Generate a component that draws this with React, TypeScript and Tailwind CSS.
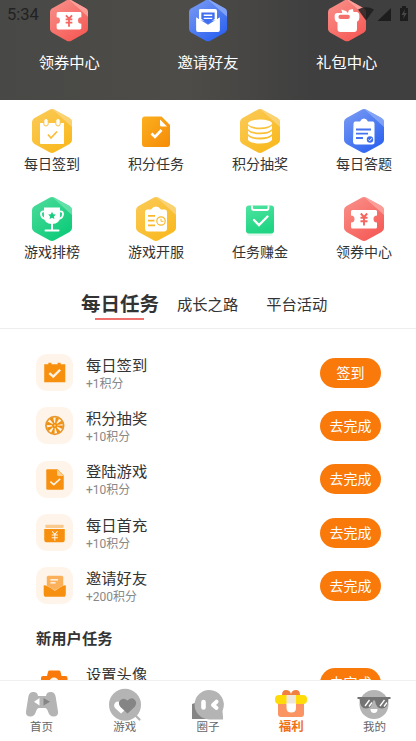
import type { ReactNode } from 'react'
import clsx from 'clsx'

type Tone = 'red' | 'blue' | 'yellow' | 'green'

const tones: Record<Tone, [string, string, string]> = {
  red: ['#f9928b', '#f65b57', '#fba8a2'],
  blue: ['#7c9df3', '#2d63f0', '#8fabf7'],
  yellow: ['#fbcb59', '#f9b91f', '#fbd67f'],
  green: ['#4fdc9c', '#0ccb79', '#6fe5af'],
}

function Hexagon({ id, tone, className, children }: { id: string; tone: Tone; className: string; children: ReactNode }) {
  const [from, to, facet] = tones[tone]
  return (
    <svg viewBox="0 0 40 44" className={clsx('shrink-0', className)}>
      <defs>
        <linearGradient id={id} x1="0" y1="0" x2="0.7" y2="1">
          <stop offset="0" stopColor={from} />
          <stop offset="1" stopColor={to} />
        </linearGradient>
      </defs>
      <path d="M17.5.7Q20-.6 22.5.7L37.5 9Q40 10.4 40 13V31Q40 33.6 37.5 35L22.5 43.3Q20 44.6 17.5 43.3L2.5 35Q0 33.6 0 31V13Q0 10.4 2.5 9Z" fill={`url(#${id})`} />
      <path d="M20 0Q21.4 0 22.5.7L37.5 9Q40 10.4 40 13V18Z" fill={facet} opacity="0.8" />
      {children}
    </svg>
  )
}

const Coupon = ({ color }: { color: string }) => (
  <g>
    <path d="M8.5 13H31.5Q33 13 33 14.5V18.5A3.5 3.5 0 0 0 33 25.5V30Q33 31.5 31.5 31.5H8.5Q7 31.5 7 30V25.5A3.5 3.5 0 0 0 7 18.5V14.5Q7 13 8.5 13Z" fill="#fff" />
    <path d="M16.8 16.5L20 20L23.2 16.5M16.5 20.8H23.5M16.5 24.3H23.5M20 20V28.5" stroke={color} strokeWidth="1.9" fill="none" />
  </g>
)

const Calendar = () => (
  <g>
    <path d="M8 14H32V34Q32 35 31 35H9Q8 35 8 34Z" fill="#fff" />
    <rect x="11.8" y="9.5" width="4.4" height="7.5" rx="2.2" fill="#fff" stroke="#f9c142" strokeWidth="1" />
    <rect x="23.8" y="9.5" width="4.4" height="7.5" rx="2.2" fill="#fff" stroke="#f9c142" strokeWidth="1" />
    <path d="M16 25.5L19 29L25 22.5" stroke="#f9bd3b" strokeWidth="1.8" fill="none" />
  </g>
)

const Coins = () => (
  <g fill="#fff">
    <ellipse cx="20" cy="14.5" rx="12" ry="4" />
    <path d="M8 16.5Q11 20.2 20 20.2T32 16.5V20Q29 23.5 20 23.5T8 20Z" />
    <path d="M8 21.7Q11 25.2 20 25.2T32 21.7V25Q29 28.6 20 28.6T8 25Z" />
    <path d="M8 27Q11 30.4 20 30.4T32 27V31Q29 34.5 20 34.5T8 31Z" />
  </g>
)

const Quiz = () => (
  <g>
    <path d="M11 12.5H16Q17.5 9.5 20 9.5T24 12.5H29Q30.5 12.5 30.5 15V32Q31 35.5 28 35.5H12Q9 35.5 9 32L9.5 15Q9.5 12.5 11 12.5Z" fill="#fff" />
    <path d="M12 20.5H27M12 24.7H24M12 29H19" stroke="#4773ee" strokeWidth="1.8" />
    <circle cx="26" cy="30.5" r="3.2" fill="#3d6df0" />
    <path d="M24.4 30.5L25.7 31.8L27.9 29.2" stroke="#fff" strokeWidth="1" fill="none" />
  </g>
)

const Trophy = () => (
  <g>
    <path d="M12 10.5H28V20Q28 26.5 20 27Q12 26.5 12 20Z" fill="#fff" />
    <path d="M12.5 14.5Q9 13.8 9 17Q9.2 21.5 14 22M27.5 14.5Q31 13.8 31 17Q30.8 21.5 26 22" stroke="#fff" strokeWidth="1.9" fill="none" />
    <path d="M20 26V32.5M13.5 33.5H26.5" stroke="#fff" strokeWidth="2" strokeLinecap="round" />
    <path d="M20 14.8L21.2 17.3L23.8 17.6L21.9 19.4L22.4 22L20 20.7L17.6 22L18.1 19.4L16.2 17.6L18.8 17.3Z" fill="#19cc80" />
  </g>
)

const Schedule = () => (
  <g>
    <path d="M11 12.5H15Q17 9.5 20 9.5T25 12.5H29Q31 12.5 31 15V31.5Q31 34.5 28 34.5H12Q9 34.5 9 31.5V15Q9 12.5 11 12.5Z" fill="#fff" />
    <path d="M12 18.8H19M12 23.6H18.5M12 28.4H19" stroke="#f9b92e" strokeWidth="1.7" />
    <circle cx="25" cy="24" r="4.2" fill="#fff" stroke="#f9b92e" strokeWidth="1.2" />
    <path d="M25 21.8V24.3H27.3" stroke="#f9b92e" strokeWidth="1" fill="none" />
  </g>
)

const Mail = () => (
  <g>
    <path d="M12 10H27.5Q29.5 10 29.5 12V22H10.5V11.5Q10.5 10 12 10Z" fill="#fff" />
    <path d="M7.5 18.5L12 21.5L20 26.5L28 21.5L32.5 18.5V32Q32.5 34 30.5 34H9.5Q7.5 34 7.5 32Z" fill="#fff" />
    <path d="M13 13.5H27V20.5L20 25L13 20.5Z" fill="#3f6ff0" />
    <path d="M15.5 16.5H24.5M15.5 19.8H24.5" stroke="#fff" strokeWidth="1.5" />
  </g>
)

const GiftBag = () => (
  <g>
    <path d="M10 14H15L14 10.5L19 12L21 14L22 11L26 10L27 13H30.5Q33 13.5 33 17V19Q32.5 23 30.5 23V31Q30.5 34 27.5 34H13Q10 34 10 31V24Q7 23 7 19V17Q7 14 10 14Z" fill="#fff" />
    <rect x="11" y="16" width="12" height="4.3" rx="2.1" fill="#f5716d" />
  </g>
)

function PointsTask() {
  return (
    <svg viewBox="0 0 40 44" className="h-11 w-10 shrink-0">
      <defs>
        <linearGradient id="points" x1="0" y1="0" x2="1" y2="1">
          <stop offset="0" stopColor="#fbb01f" />
          <stop offset="1" stopColor="#f68b08" />
        </linearGradient>
      </defs>
      <path d="M9 7.5H25.5L34 16V35Q34 38 31 38H9Q6 38 6 35V10.5Q6 7.5 9 7.5Z" fill="url(#points)" />
      <path d="M24 10.5L31 17.5H25.5Q24 17.5 24 16Z" fill="#fff" />
      <path d="M15.5 24.5L19 28L25.5 21" stroke="#fff" strokeWidth="2.6" fill="none" />
    </svg>
  )
}

function EarnTask() {
  return (
    <svg viewBox="0 0 40 44" className="h-11 w-10 shrink-0">
      <rect x="7" y="33" width="26" height="6" rx="3" fill="#e3f8ee" />
      <defs>
        <linearGradient id="earn" x1="0" y1="0" x2="0.3" y2="1">
          <stop offset="0" stopColor="#4de4a0" />
          <stop offset="1" stopColor="#20d583" />
        </linearGradient>
      </defs>
      <rect x="6" y="8.5" width="28" height="28" rx="3" fill="url(#earn)" />
      <path d="M12 8.5V11Q12 13 14 13H26.5Q28.5 13 28.5 11V8.5" stroke="#fff" strokeWidth="1.8" fill="none" />
      <path d="M14 23L19 28L27.5 19.5" stroke="#fff" strokeWidth="2.3" strokeLinecap="round" fill="none" />
    </svg>
  )
}

const banner = [
  { label: '领券中心', icon: <Hexagon id="b1" tone="red" className="h-[43px] w-[38px]"><Coupon color="#f56661" /></Hexagon> },
  { label: '邀请好友', icon: <Hexagon id="b2" tone="blue" className="h-[43px] w-[38px]"><Mail /></Hexagon> },
  { label: '礼包中心', icon: <Hexagon id="b3" tone="red" className="h-[43px] w-[38px]"><GiftBag /></Hexagon> },
]

const shortcuts = [
  { label: '每日签到', icon: <Hexagon id="s1" tone="yellow" className="h-11 w-10"><Calendar /></Hexagon> },
  { label: '积分任务', icon: <PointsTask /> },
  { label: '积分抽奖', icon: <Hexagon id="s3" tone="yellow" className="h-11 w-10"><Coins /></Hexagon> },
  { label: '每日答题', icon: <Hexagon id="s4" tone="blue" className="h-11 w-10"><Quiz /></Hexagon> },
  { label: '游戏排榜', icon: <Hexagon id="s5" tone="green" className="h-11 w-10"><Trophy /></Hexagon> },
  { label: '游戏开服', icon: <Hexagon id="s6" tone="yellow" className="h-11 w-10"><Schedule /></Hexagon> },
  { label: '任务赚金', icon: <EarnTask /> },
  { label: '领券中心', icon: <Hexagon id="s8" tone="red" className="h-11 w-10"><Coupon color="#f56661" /></Hexagon> },
]

// Task glyphs share a 36x36 box
const tasks = [
  {
    title: '每日签到',
    points: '+1积分',
    action: '签到',
    icon: (
      <>
        <path d="M8 10H12V8.5H15V10H21V8.5H24V10H28.5V27.5H8Z" fill="#f7900f" />
        <path d="M13 18.5L16.8 22L23.5 15.3" stroke="#fff3e4" strokeWidth="2.3" fill="none" />
      </>
    ),
  },
  {
    title: '积分抽奖',
    points: '+10积分',
    action: '去完成',
    icon: (
      <>
        <circle cx="18.3" cy="18" r="8.6" fill="#fff3e4" stroke="#e8962a" strokeWidth="1.7" />
        <circle cx="18.3" cy="18" r="5.2" stroke="#f0900f" strokeWidth="5.5" strokeDasharray="2.3 1.784" fill="none" />
        <circle cx="18.3" cy="18" r="2.7" fill="#f0900f" />
        <circle cx="18.3" cy="18" r="1" fill="#fbc77c" />
      </>
    ),
  },
  {
    title: '登陆游戏',
    points: '+10积分',
    action: '去完成',
    icon: (
      <>
        <path d="M11 8H21L27 14V26.5Q27 28 25.5 28H11.5Q10 28 10 26.5V9Q10 8 11 8Z" fill="#f7900f" />
        <path d="M20.5 8L27 14.5H22Q20.5 14.5 20.5 13Z" fill="#fccf91" />
        <path d="M14 20L17.3 23L23.5 17.5" stroke="#fff3e4" strokeWidth="1.6" fill="none" />
      </>
    ),
  },
  {
    title: '每日首充',
    points: '+10积分',
    action: '去完成',
    icon: (
      <>
        <rect x="9" y="10.5" width="18" height="3" rx="1" fill="#fac98d" />
        <path d="M8 14.5H28V25Q28 27.5 26 27.5H10Q8 27.5 8 25Z" fill="#f7900f" />
        <path d="M15.7 16.8L18.3 19.8L21 16.8M15.3 20.5H21.3M15.3 23H21.3M18.3 20V26" stroke="#fff3e4" strokeWidth="1" fill="none" />
      </>
    ),
  },
  {
    title: '邀请好友',
    points: '+200积分',
    action: '去完成',
    icon: (
      <>
        <path d="M12 8.5H25Q26.5 8.5 26.5 10V18L18.3 22.5L10.5 18V10Q10.5 8.5 12 8.5Z" fill="#fbb15b" />
        <path d="M14 12.5H21.5M14 15.5H19" stroke="#fff" strokeWidth="1.3" />
        <path d="M7.5 18Q9 17 18.3 23Q28 17 29 18V26Q29 29 27 29H9.5Q7.5 29 7.5 26Z" fill="#f7900f" />
      </>
    ),
  },
]

const nav = [
  {
    label: '首页',
    icon: (
      <>
        <path d="M7.5 2Q12.5 1.5 13 6H21Q21.5 1.5 26.5 2Q30 2.3 30.7 7L33 21.5Q33.5 26.5 28.5 26.5Q24.5 26.5 23 21.5Q22 18 20 18H14Q12 18 11 21.5Q9.5 26.5 5.5 26.5Q.5 26.5 1 21.5L3.3 7Q4 2.3 7.5 2Z" fill="#b4b4b4" />
        <path d="M14.5 8V15.5L9 11.7Z" fill="#fff" />
        <path d="M18.5 8V15.5L25 11.7Z" fill="#858585" />
      </>
    ),
  },
  {
    label: '游戏',
    icon: (
      <>
        <path d="M27 25Q29 27 31.5 29.5" stroke="#b4b4b4" strokeWidth="2.3" strokeLinecap="round" />
        <circle cx="17" cy="14.7" r="16" fill="#b4b4b4" />
        <path d="M7.5 12.5Q10 10.5 12.5 13L17 20L13 23.5L7 18Q5 15 7.5 12.5Z" fill="#fff" />
        <path d="M19.5 10.5Q24 6.5 27 10Q29.5 13.5 26.5 17L19.5 23.5L12.5 17Q9.5 13.5 12 10.5Q15.5 7 19.5 10.5Z" fill="#858585" />
      </>
    ),
  },
  {
    label: '圈子',
    icon: (
      <>
        <path d="M1 14L7 12L15 29H1Z" fill="#858585" />
        <path d="M18.3 0A14.7 14.7 0 1 0 18.3 29.4H32V27L31.5 21A14.7 14.7 0 0 0 18.3 0Z" fill="#b4b4b4" />
        <path d="M12.5 12V17.5" stroke="#fff" strokeWidth="4.6" strokeLinecap="round" />
        <path d="M25.5 11.7L22 14.9L25.5 18" stroke="#fff" strokeWidth="4" strokeLinecap="round" strokeLinejoin="round" fill="none" />
      </>
    ),
  },
  {
    label: '福利',
    icon: (
      <>
        <path d="M8 5Q8 0 12 0Q16 0 17 4Q18 0 22 0Q26 0 26 5Z" fill="#f07f40" />
        <path d="M4 12H30V24Q30 27 27 27H7Q4 27 4 24Z" fill="#fb9463" />
        <rect x="1" y="5" width="32" height="9" rx="4" fill="#ffdc08" />
        <path d="M12.5 5H22V14.5H12.5Z" fill="#eee6d9" />
        <path d="M12.5 13.5H22V18Q22 22.5 17.3 22.5T12.5 18Z" fill="#fff" />
      </>
    ),
  },
  {
    label: '我的',
    icon: (
      <>
        <circle cx="17" cy="14.5" r="14.5" fill="#b4b4b4" />
        <path d="M.5 7H33.5V9H31.5Q31 18.5 25 18.5Q19 18.5 18 10.5H16Q15 18.5 9 18.5Q3 18.5 2.5 9H.5Z" fill="#747474" />
        <path d="M8 16L12.5 10M12 16.5L15 12.5M23 16L27.5 10M27 16.5L30 12.5" stroke="#fff" strokeWidth="1.3" />
        <path d="M13.5 19H20.5Q20.5 23 17 23T13.5 19Z" fill="#fff" />
      </>
    ),
  },
]

function StatusBar() {
  return (
    <div className="absolute inset-x-0 top-0 h-7 text-[#222]">
      <span className="absolute left-[7px] top-[5px] text-[16.5px] leading-5">5:34</span>
      <svg viewBox="0 0 58 16" className="absolute right-0 top-[6px] h-4 w-[58px]" fill="#1d1d1d">
        <path d="M0 3.5Q8 -1 16 3.5L8 14.5Z" opacity="0.85" />
        <path d="M33 2V15H19.5Z" />
        <path d="M42 2H44V0H48V2H50V15H42Z" />
        <path d="M47 3L43.5 9H46L45 13L48.8 7H46.3Z" fill="#484847" />
      </svg>
    </div>
  )
}

function ActionButton({ children }: { children: ReactNode }) {
  return (
    <button type="button" className="h-[30px] w-[61px] shrink-0 rounded-full bg-[#f9790a] text-[14px] leading-[30px] text-white">
      {children}
    </button>
  )
}

export default function App() {
  return (
    <div className="flex h-[741px] w-[416px] flex-col overflow-hidden bg-white font-['Roboto','Noto_Sans_CJK_SC',sans-serif] text-[#333]">
      <header className="relative h-[100px] shrink-0 overflow-hidden bg-linear-to-r from-[#484846] via-[#4d4c48] via-45% to-[#3f3f3f] to-75%">
        <div className="-mt-px grid grid-cols-3">
          {banner.map(item => (
            <div key={item.label} className="flex flex-col items-center">
              {item.icon}
              <span className="mt-[10px] text-[15.3px] leading-[22px] text-white">{item.label}</span>
            </div>
          ))}
        </div>
        <StatusBar />
      </header>

      <section className="grid h-[178px] shrink-0 grid-cols-4 content-start gap-y-[22px] pt-[9px]">
        {shortcuts.map(item => (
          <div key={item.label} className="flex h-[66px] flex-col items-center">
            {item.icon}
            <span className="text-[14px] leading-[22px]">{item.label}</span>
          </div>
        ))}
      </section>

      <div className="flex h-[51px] shrink-0 border-b border-[#eee] pl-[81px] text-[15.3px] leading-[54px]">
        <div className="relative mr-[18px] text-[19.5px] font-bold leading-[54px]">
          每日任务
          <span className="absolute left-[14px] top-10 h-0.5 w-[49px] bg-[#ee6f6b]" />
        </div>
        <span className="mr-7">成长之路</span>
        <span>平台活动</span>
      </div>

      <main className="min-h-0 flex-1 overflow-hidden pl-9 pr-[35px] pt-[17px]">
        {tasks.map(task => (
          <div key={task.title} className="flex h-[53.3px] items-center">
            <svg viewBox="0 0 36 36" className="h-[37px] w-[37px] shrink-0">
              <rect width="36" height="36" rx="11" fill="#fff4e9" />
              {task.icon}
            </svg>
            <div className="ml-[13px] flex-1 pt-[2px]">
              <div className="text-[15.3px] leading-5">{task.title}</div>
              <div className="text-[12px] leading-4 text-[#888]">{task.points}</div>
            </div>
            <ActionButton>{task.action}</ActionButton>
          </div>
        ))}
        <h2 className="mt-[15px] text-[15.3px] font-bold leading-6">新用户任务</h2>
        <div className="mt-[17px] flex items-start">
          <svg viewBox="0 0 36 36" className="mt-px h-9 w-9 shrink-0">
            <path d="M13 1.5H23Q24.5 1.5 24.7 3.5L25.5 7H29.5Q31.5 7 31.5 9V24H5V9Q5 7 7 7H11L12 3Q12.3 1.5 13 1.5Z" fill="#f97a0a" />
            <circle cx="18" cy="13" r="4.5" fill="#fff4e9" />
          </svg>
          <div className="-mt-[3px] ml-[14px] flex-1 text-[15.3px] leading-5">设置头像</div>
          <ActionButton>去完成</ActionButton>
        </div>
      </main>

      <nav className="grid h-[61px] shrink-0 grid-cols-5 border-t border-[#f0f0f0] bg-white pt-[9px]">
        {nav.map(item => (
          <div key={item.label} className="flex flex-col items-center">
            <svg viewBox="0 0 34 30" className="h-[30px] w-[34px] shrink-0 overflow-visible">
              {item.icon}
            </svg>
            <span
              className={clsx(
                '-mt-px leading-4',
                item.label === '福利' ? 'text-[12.5px] font-bold text-[#ef7118]' : 'text-[11.5px] text-[#666]',
              )}
            >
              {item.label}
            </span>
          </div>
        ))}
      </nav>
    </div>
  )
}
